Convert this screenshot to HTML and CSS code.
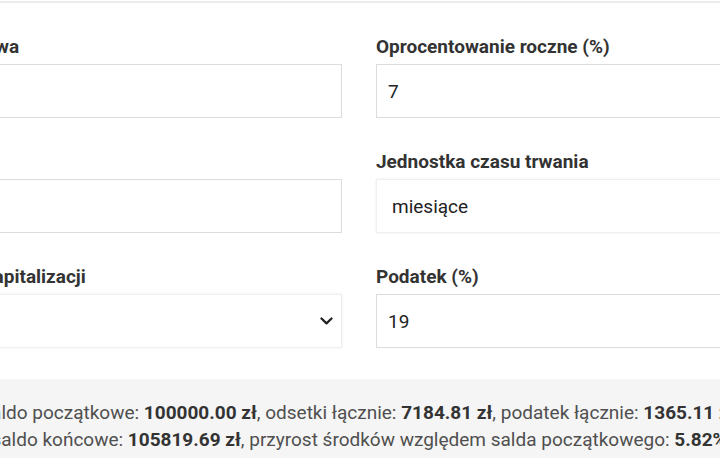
FILE: index.html
```html
<!DOCTYPE html>
<html>
  <head>
    <meta charset="utf-8">
    <title>Kalkulator lokaty</title>
    <link rel="stylesheet" href="styles.css">
  </head>
  <body>
    <div class="top-line"></div>
    <div class="page">
      <form class="calc-form">
        <div class="field">
          <label>Kwota początkowa</label>
          <input type="text" class="text-input" value="">
        </div>
        <div class="field">
          <label>Oprocentowanie roczne (%)</label>
          <input type="text" class="text-input" value="7">
        </div>
        <div class="field">
          <label>Czas</label>
          <input type="text" class="text-input" value="">
        </div>
        <div class="field">
          <label>Jednostka czasu trwania</label>
          <div class="select-box"><span>miesiące</span></div>
        </div>
        <div class="field">
          <label>Częstotliwość kapitalizacji</label>
          <div class="select-box">
            <span></span>
            <svg class="chevron" width="13" height="8" viewBox="0 0 13 8"><path d="M1.5 1.5 L6.5 6.3 L11.5 1.5" fill="none" stroke="#222" stroke-width="2.3" stroke-linecap="round" stroke-linejoin="round"/></svg>
          </div>
        </div>
        <div class="field">
          <label>Podatek (%)</label>
          <input type="text" class="text-input" value="19">
        </div>
      </form>
      <div class="result">
        <p>Saldo początkowe: <b>100000.00 zł</b>, odsetki łącznie: <b>7184.81 zł</b>, podatek łącznie: <b>1365.11 zł</b>,</p>
        <p>saldo końcowe: <b>105819.69 zł</b>, przyrost środków względem salda początkowego: <b>5.82%</b></p>
      </div>
    </div>
  </body>
</html>
```
FILE: styles.css
```css
*{margin: 0;padding: 0;box-sizing: border-box;}
html, body {overflow: hidden;background: #fff;}
body {font-family: Roboto, "Noto Sans", sans-serif;color: #333;}

.top-line {height: 2px;margin-top: 1px;background: #ececec;}

.page {width: 1000px;margin-left: -141px;}

.calc-form {
  display: grid;
  grid-template-columns: 483px 483px;
  column-gap: 34px;
  row-gap: 34px;
  padding-top: 34px;
}
.field label {
  display: block;
  font-size: 19px;
  line-height: 20px;
  font-weight: 700;
  color: #333;
  margin-bottom: 7px;
}
.text-input {
  display: block;
  width: 100%;
  height: 54px;
  border: 1px solid #dcdcdc;
  padding: 0 11px;
  font-family: Roboto, sans-serif;
  font-size: 19px;
  color: #222;
  background: #fff;
  outline: none;
}
.select-box {
  display: flex;
  align-items: center;
  justify-content: space-between;
  height: 54px;
  padding: 0 8px 0 15px;
  border: 1px solid #efefef;
  box-shadow: 0 0 3px rgba(0,0,0,.07);
  font-size: 19px;
  color: #222;
  background: #fff;
}
.chevron {display: block;}

.result {
  width: 958px;
  margin: 31px 0 0 21px;
  background: #f5f5f5;
  padding: 20px 0 20px;
  text-align: center;
  font-size: 19px;
  line-height: 27px;
  color: #4f4f4f;
}
.result b {color: #333;}
```
